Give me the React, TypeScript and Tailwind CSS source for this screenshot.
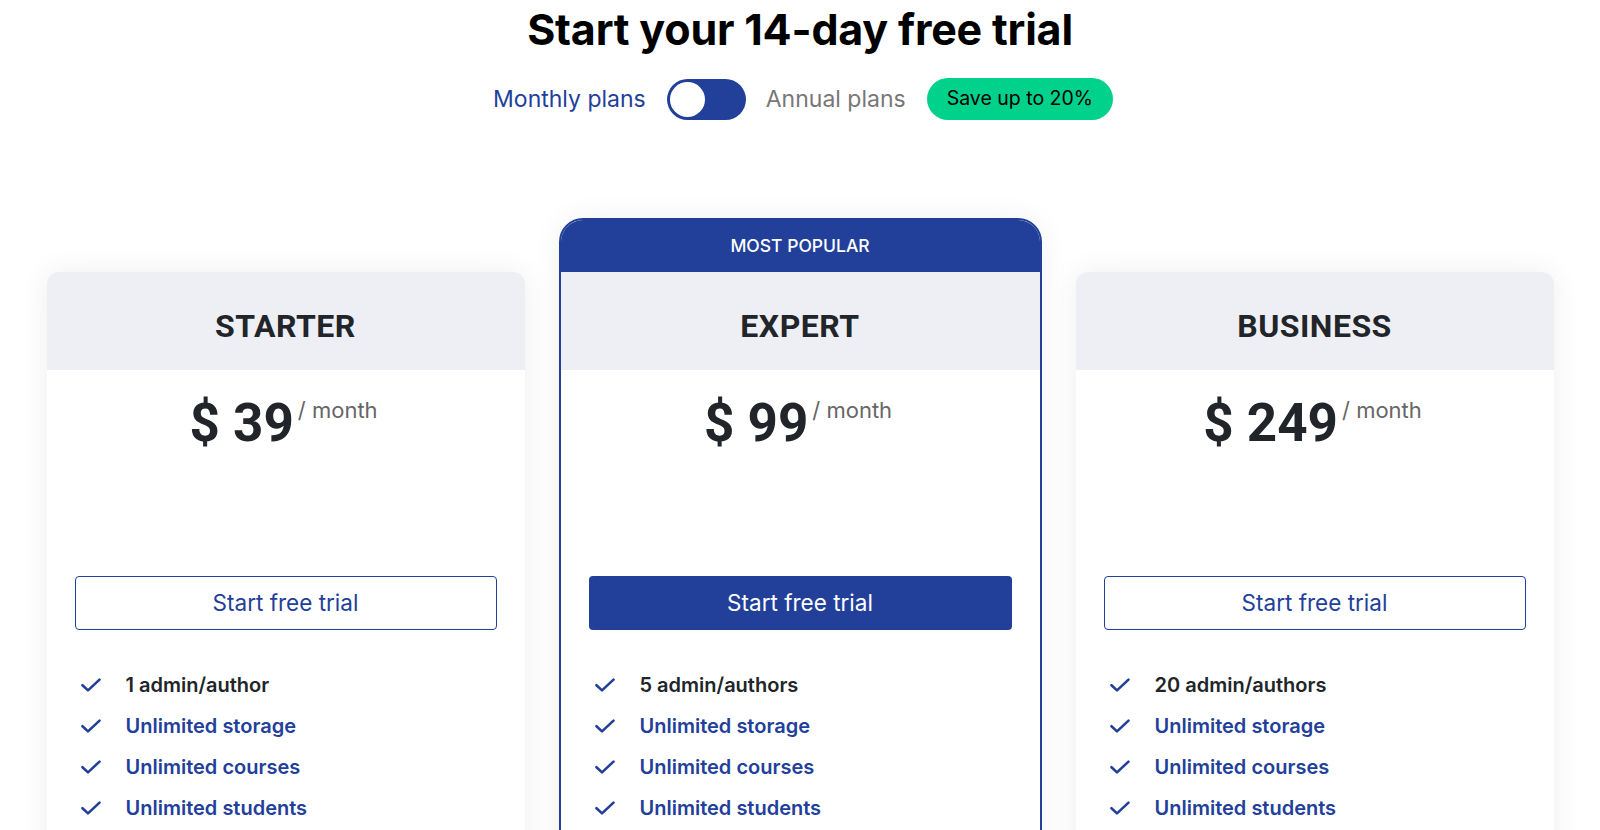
type Plan = {
  name: string;
  price: number;
  admins: string;
  popular?: boolean;
};

const PLANS: Plan[] = [
  { name: "STARTER", price: 39, admins: "1 admin/author" },
  { name: "EXPERT", price: 99, admins: "5 admin/authors", popular: true },
  { name: "BUSINESS", price: 249, admins: "20 admin/authors" },
];

const FEATURES = ["Unlimited storage", "Unlimited courses", "Unlimited students"];

const sans = "font-['Inter','Noto_Sans',sans-serif]";
const heading = "font-['Roboto','Liberation_Sans',sans-serif]";

function CheckMark() {
  return (
    <svg width="20" height="14" viewBox="0 0 20 14" fill="none" className="shrink-0 mr-[25px]">
      <path d="M1.5 7.2 7 12.4 18.5 1.6" stroke="#22409a" strokeWidth="2.6" strokeLinecap="round" strokeLinejoin="round" />
    </svg>
  );
}

function PlanBody({ plan }: { plan: Plan }) {
  return (
    <>
      <div className="h-[98px] bg-[#eeeff4] flex items-center justify-center pt-[10px]">
        <h2 className={`${heading} text-[32px] font-bold tracking-[0.5px] text-[#212529]`}>
          {plan.name}
        </h2>
      </div>

      <div className="h-[206px] flex justify-center pt-[23px] pr-[4px]">
        <div className="flex items-start">
          <span className={`${heading} text-[53px] leading-[60px] font-bold text-[#212529]`}>
            $ {plan.price}
          </span>
          <span className={`${sans} text-[22px] text-[#666] ml-[4px] mt-[1px]`}>/ month</span>
        </div>
      </div>

      <div className="px-[28px]">
        <button
          className={`${sans} w-full h-[54px] rounded-[4px] text-[22.5px] ${
            plan.popular
              ? "bg-[#22409a] text-white"
              : "border-[1.5px] border-[#22409a] text-[#22409a] bg-white"
          }`}
        >
          Start free trial
        </button>

        <ul className={`${sans} mt-[34px] pl-[6px] pb-[40px]`}>
          <li className="flex items-center h-[41px] text-[20px] font-semibold text-[#212529]">
            <CheckMark />
            {plan.admins}
          </li>
          {FEATURES.map((f) => (
            <li key={f} className="flex items-center h-[41px] text-[20px] font-semibold text-[#22409a]">
              <CheckMark />
              {f}
            </li>
          ))}
        </ul>
      </div>
    </>
  );
}

export default function App() {
  return (
    <div className={`${sans} bg-white h-[830px] overflow-hidden`}>
      <h1 className="text-center text-[43px] font-bold text-black leading-[58px] tracking-[-0.2px]">
        Start your 14-day free trial
      </h1>

      <div className="flex items-center justify-center mt-[20px] ml-[6px]">
        <span className="text-[23px] text-[#22409a]">Monthly plans</span>
        <div className="ml-[21px] w-[79px] h-[41px] rounded-full bg-[#22409a] p-[3px] flex items-center">
          <div className="w-[35px] h-[35px] rounded-full bg-white" />
        </div>
        <span className="ml-[20px] text-[23px] text-[#777]">Annual plans</span>
        <span className="ml-[21px] h-[42px] px-[20px] rounded-full bg-[#00d18b] text-black text-[19.5px] flex items-center">
          Save up to 20%
        </span>
      </div>

      <div className="mt-[98px] grid grid-cols-[478px_483px_478px] gap-x-[34px] justify-center items-start">
        {PLANS.map((plan) =>
          plan.popular ? (
            <div
              key={plan.name}
              className="rounded-t-[24px] border-2 border-[#22409a] bg-white overflow-hidden shadow-[0_0_30px_rgba(0,0,0,0.06)]"
            >
              <div className="h-[52px] bg-[#22409a] flex items-center justify-center text-white text-[17.5px] font-medium">
                MOST POPULAR
              </div>
              <PlanBody plan={plan} />
            </div>
          ) : (
            <div
              key={plan.name}
              className="mt-[54px] rounded-t-[12px] bg-white overflow-hidden shadow-[0_0_30px_rgba(0,0,0,0.07)]"
            >
              <PlanBody plan={plan} />
            </div>
          )
        )}
      </div>
    </div>
  );
}
